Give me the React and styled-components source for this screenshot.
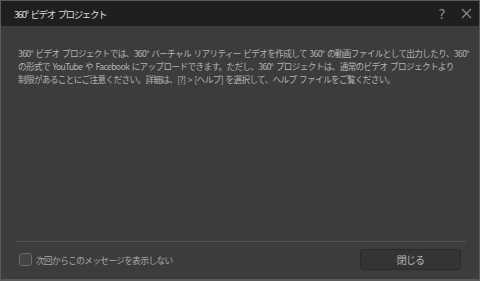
import React, { useState } from 'react'
import styled, { createGlobalStyle } from 'styled-components'

const GlobalStyle = createGlobalStyle`
  html, body {
    margin: 0;
    padding: 0;
    background: #3c3c3c;
  }
  * {
    box-sizing: border-box;
  }
`

const font = `"Noto Sans CJK JP", "Noto Sans", sans-serif`

const App = () => {
  const [hide, setHide] = useState(false)

  return (
    <>
      <GlobalStyle />
      <Dialog>
        <TitleBar>
          <Title>360° ビデオ プロジェクト</Title>
          <TitleButtons>
            <IconButton>?</IconButton>
            <IconButton>
              <svg width="11" height="11" viewBox="0 0 11 11">
                <path d="M1 1L10 10M10 1L1 10" stroke="#8a8a8a" strokeWidth="1.2" />
              </svg>
            </IconButton>
          </TitleButtons>
        </TitleBar>
        <Body>
          <Message>
            360° ビデオ プロジェクトでは、360° バーチャル リアリティー ビデオを作成して 360° の動画ファイルとして出力したり、360°
            <br />
            の形式で YouTube や Facebook にアップロードできます。ただし、360° プロジェクトは、通常のビデオ プロジェクトより
            <br />
            制限があることにご注意ください。詳細は、[?] &gt; [ヘルプ] を選択して、ヘルプ ファイルをご覧ください。
          </Message>
          <Footer>
            <CheckLabel onClick={() => setHide(!hide)}>
              <CheckBox checked={hide} />
              次回からこのメッセージを表示しない
            </CheckLabel>
            <CloseButton>閉じる</CloseButton>
          </Footer>
        </Body>
      </Dialog>
    </>
  )
}

export default App

const Dialog = styled.div`
  width: 480px;
  height: 281px;
  display: flex;
  flex-direction: column;
  border: 1px solid #5a5a5a;
  border-bottom-width: 2px;
  background: #3c3c3c;
  font-family: ${font};
`

const TitleBar = styled.div`
  height: 25px;
  flex-shrink: 0;
  display: flex;
  align-items: center;
  justify-content: space-between;
  padding: 0 6px 0 13px;
  background: #1f1f1f;
`

const Title = styled.div`
  font-size: 9.5px;
  color: #dcdcdc;
  letter-spacing: -1.4px;
  word-spacing: 2px;
`

const TitleButtons = styled.div`
  display: flex;
  align-items: center;
  gap: 10px;
`

const IconButton = styled.div`
  width: 14px;
  height: 16px;
  display: flex;
  align-items: center;
  justify-content: center;
  color: #8a8a8a;
  font-size: 14px;
  font-family: "DejaVu Sans", sans-serif;
`

const Body = styled.div`
  flex: 1;
  display: flex;
  flex-direction: column;
  justify-content: space-between;
  padding: 21px 13px 9px 17px;
`

const Message = styled.p`
  margin: 0;
  font-size: 8.6px;
  line-height: 13px;
  color: #b4b4b4;
  letter-spacing: -0.62px;
  word-spacing: 1.2px;
  white-space: nowrap;
`

const Footer = styled.div`
  display: flex;
  align-items: center;
  justify-content: space-between;
  border-top: 1px solid #555555;
  margin-left: -3px;
  padding: 7px 5px 0 4px;
`

const CheckLabel = styled.label`
  display: flex;
  align-items: center;
  gap: 4px;
  font-size: 8.6px;
  letter-spacing: -0.55px;
  color: #a8a8a8;
  cursor: pointer;
`

const CheckBox = styled.span`
  width: 13px;
  height: 13px;
  border-radius: 3px;
  border: 1px solid #6a6a6a;
  background: ${props => (props.checked ? '#5a5a5a' : '#444444')};
`

const CloseButton = styled.button`
  width: 101px;
  height: 21px;
  border: 1px solid #2a2a2a;
  border-radius: 3px;
  background: #343434;
  color: #b8b8b8;
  font-family: ${font};
  font-size: 10px;
  letter-spacing: -0.8px;
  cursor: pointer;
`
